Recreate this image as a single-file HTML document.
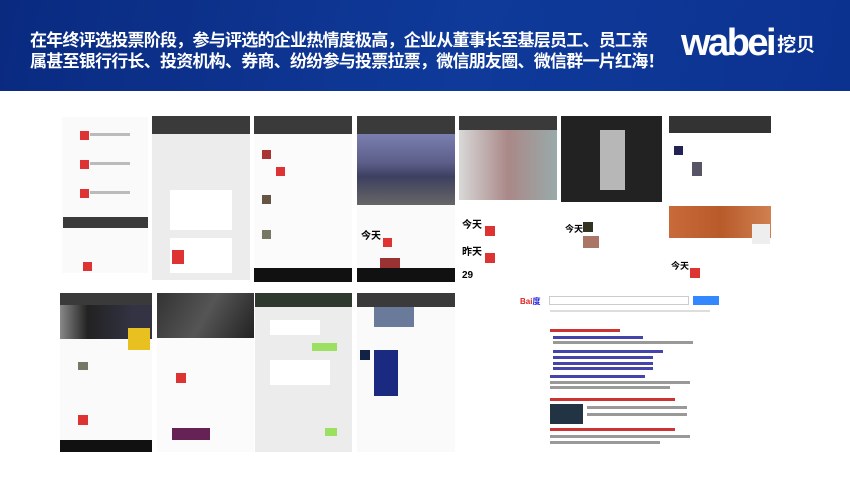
<!DOCTYPE html>
<html><head><meta charset="utf-8"><style>
*{margin:0;padding:0;box-sizing:border-box}
body{width:850px;height:478px;background:#fff;position:relative;overflow:hidden;font-family:"Liberation Sans","Noto Sans CJK SC",sans-serif}
.hd{position:absolute;left:0;top:0;width:850px;height:91px;background:linear-gradient(100deg,#0a2a80 0%,#0f3a9a 55%,#0c3290 100%)}
.t{position:absolute;left:30px;top:30px;color:#fff;font-weight:bold;font-size:17px;line-height:21px;letter-spacing:-0.75px;white-space:nowrap}
.logo{position:absolute;left:681px;top:22px;color:#fff;font-weight:bold;font-size:38px;letter-spacing:-2.5px}
.logo span{font-size:19px;letter-spacing:0;vertical-align:4px;margin-left:3px}
.b{position:absolute}
.dk{background:#3a3a3a}
.bl{background:#111}
.ln{position:absolute;height:3px;background:#bbb}
.rd{position:absolute;width:9px;height:9px;background:#d33}
</style></head><body>
<div class="hd"></div>
<div class="t">在年终评选投票阶段，参与评选的企业热情度极高，企业从董事长至基层员工、员工亲<br>属甚至银行行长、投资机构、券商、纷纷参与投票拉票，微信朋友圈、微信群一片红海！</div>
<div class="logo">wabei<span>挖贝</span></div>

<!-- row 1 -->
<div class="b" style="left:62px;top:117px;width:86px;height:156px;background:#fafafa"></div>
<div class="rd" style="left:80px;top:131px"></div><div class="rd" style="left:80px;top:160px"></div><div class="rd" style="left:80px;top:189px"></div><div class="rd" style="left:83px;top:262px"></div>
<div class="b dk" style="left:63px;top:217px;width:85px;height:11px"></div>
<div class="ln" style="left:90px;top:133px;width:40px"></div><div class="ln" style="left:90px;top:162px;width:40px"></div><div class="ln" style="left:90px;top:191px;width:40px"></div>

<div class="b" style="left:152px;top:116px;width:98px;height:164px;background:#ececec"></div>
<div class="b dk" style="left:152px;top:116px;width:98px;height:18px"></div>
<div class="b" style="left:170px;top:190px;width:62px;height:40px;background:#fff"></div>
<div class="b" style="left:170px;top:238px;width:62px;height:35px;background:#fff"></div>
<div class="rd" style="left:172px;top:250px;width:12px;height:14px"></div>

<div class="b" style="left:254px;top:116px;width:98px;height:166px;background:#fbfbfb"></div>
<div class="b dk" style="left:254px;top:116px;width:98px;height:18px"></div>
<div class="b bl" style="left:254px;top:268px;width:98px;height:14px"></div>
<div class="rd" style="left:276px;top:167px"></div><div class="b" style="left:262px;top:150px;width:9px;height:9px;background:#a33"></div>
<div class="b" style="left:262px;top:195px;width:9px;height:9px;background:#654"></div><div class="b" style="left:262px;top:230px;width:9px;height:9px;background:#776"></div>

<div class="b" style="left:357px;top:116px;width:98px;height:166px;background:#fafafa"></div>
<div class="b dk" style="left:357px;top:116px;width:98px;height:18px"></div>
<div class="b" style="left:357px;top:134px;width:98px;height:71px;background:linear-gradient(180deg,#7a7fb0 0%,#5d5f8a 40%,#3d4060 60%,#666 100%)"></div>
<div class="b bl" style="left:357px;top:268px;width:98px;height:14px"></div>
<div class="b" style="left:361px;top:227px;font-size:10px;font-weight:bold">今天</div>
<div class="rd" style="left:383px;top:238px;width:9px;height:9px"></div>
<div class="b" style="left:380px;top:258px;width:20px;height:10px;background:#933"></div>

<div class="b" style="left:459px;top:116px;width:98px;height:84px;background:linear-gradient(90deg,#d8d8d8,#a88 50%,#9aa 100%)"></div>
<div class="b dk" style="left:459px;top:116px;width:98px;height:14px"></div>
<div class="b" style="left:462px;top:216px;font-size:10px;font-weight:bold">今天</div>
<div class="b" style="left:462px;top:243px;font-size:10px;font-weight:bold">昨天</div>
<div class="b" style="left:462px;top:270px;font-size:10px;font-weight:bold">29</div>
<div class="rd" style="left:485px;top:226px;width:10px;height:10px"></div><div class="rd" style="left:485px;top:253px;width:10px;height:10px"></div>

<div class="b" style="left:561px;top:116px;width:101px;height:86px;background:#222"></div>
<div class="b" style="left:600px;top:130px;width:25px;height:60px;background:#ddd;opacity:.8"></div>
<div class="b" style="left:565px;top:222px;font-size:9px;font-weight:bold">今天</div>
<div class="b" style="left:583px;top:222px;width:10px;height:10px;background:#332"></div>
<div class="b" style="left:583px;top:236px;width:16px;height:12px;background:#a76"></div>

<div class="b" style="left:669px;top:116px;width:102px;height:17px;background:#333"></div>
<div class="b" style="left:674px;top:146px;width:9px;height:9px;background:#225"></div>
<div class="b" style="left:692px;top:162px;width:10px;height:14px;background:#556"></div>
<div class="b" style="left:669px;top:206px;width:102px;height:32px;background:linear-gradient(90deg,#c86a3a,#b85a2a 50%,#d08050)"></div>
<div class="b" style="left:752px;top:224px;width:18px;height:20px;background:#eee"></div>
<div class="b" style="left:671px;top:259px;font-size:9px;font-weight:bold">今天</div>
<div class="rd" style="left:690px;top:268px;width:10px;height:10px"></div>

<!-- row 2 -->
<div class="b" style="left:60px;top:293px;width:92px;height:159px;background:#fafafa"></div>
<div class="b" style="left:60px;top:293px;width:92px;height:46px;background:linear-gradient(90deg,#888,#222 30%,#334 80%)"></div>
<div class="b dk" style="left:60px;top:293px;width:92px;height:12px"></div>
<div class="b" style="left:128px;top:328px;width:22px;height:22px;background:#e8c020"></div>
<div class="b bl" style="left:60px;top:440px;width:92px;height:12px"></div>
<div class="b" style="left:78px;top:362px;width:10px;height:8px;background:#776"></div>
<div class="rd" style="left:78px;top:415px;width:10px;height:10px"></div>

<div class="b" style="left:157px;top:293px;width:97px;height:159px;background:#fbfbfb"></div>
<div class="b" style="left:157px;top:293px;width:97px;height:45px;background:linear-gradient(120deg,#333,#555 50%,#222)"></div>
<div class="rd" style="left:176px;top:373px;width:10px;height:10px"></div>
<div class="b" style="left:172px;top:428px;width:38px;height:12px;background:#625"></div>

<div class="b" style="left:255px;top:293px;width:97px;height:159px;background:#ececec"></div>
<div class="b" style="left:255px;top:293px;width:97px;height:14px;background:#2e3a2e"></div>
<div class="b" style="left:270px;top:320px;width:50px;height:15px;background:#fff"></div>
<div class="b" style="left:312px;top:343px;width:25px;height:8px;background:#9be060"></div>
<div class="b" style="left:270px;top:360px;width:60px;height:25px;background:#fff"></div>
<div class="b" style="left:325px;top:428px;width:12px;height:8px;background:#9be060"></div>

<div class="b" style="left:357px;top:293px;width:98px;height:159px;background:#fafafa"></div>
<div class="b dk" style="left:357px;top:293px;width:98px;height:14px"></div>
<div class="b" style="left:374px;top:307px;width:40px;height:20px;background:#6a7a9a"></div>
<div class="b" style="left:374px;top:350px;width:24px;height:46px;background:#1a2a80"></div>
<div class="b" style="left:360px;top:350px;width:10px;height:10px;background:#124"></div>

<!-- baidu -->
<div class="b" style="left:520px;top:296px;font-size:8px;color:#d22;font-weight:bold">Bai<span style="color:#22d">度</span></div>
<div class="b" style="left:549px;top:296px;width:140px;height:9px;border:1px solid #ccc"></div>
<div class="b" style="left:693px;top:296px;width:26px;height:9px;background:#3388ff"></div>
<div class="ln" style="left:550px;top:310px;width:160px;height:2px;background:#ddd"></div>
<div class="ln" style="left:550px;top:329px;width:70px;background:#c33"></div>
<div class="ln" style="left:553px;top:336px;width:90px;background:#44a"></div>
<div class="ln" style="left:553px;top:341px;width:140px;background:#999"></div>
<div class="ln" style="left:553px;top:350px;width:110px;background:#44a"></div>
<div class="ln" style="left:553px;top:356px;width:100px;background:#44a"></div>
<div class="ln" style="left:553px;top:362px;width:100px;background:#44a"></div>
<div class="ln" style="left:553px;top:367px;width:100px;background:#44a"></div>
<div class="ln" style="left:550px;top:375px;width:95px;background:#44a"></div>
<div class="ln" style="left:550px;top:381px;width:140px;background:#999"></div>
<div class="ln" style="left:550px;top:386px;width:120px;background:#999"></div>
<div class="ln" style="left:550px;top:398px;width:125px;background:#c33"></div>
<div class="b" style="left:550px;top:404px;width:33px;height:20px;background:#234"></div>
<div class="ln" style="left:587px;top:406px;width:100px;background:#999"></div>
<div class="ln" style="left:587px;top:413px;width:100px;background:#999"></div>
<div class="ln" style="left:550px;top:428px;width:125px;background:#c33"></div>
<div class="ln" style="left:550px;top:435px;width:140px;background:#999"></div>
<div class="ln" style="left:550px;top:441px;width:110px;background:#999"></div>
</body></html>
